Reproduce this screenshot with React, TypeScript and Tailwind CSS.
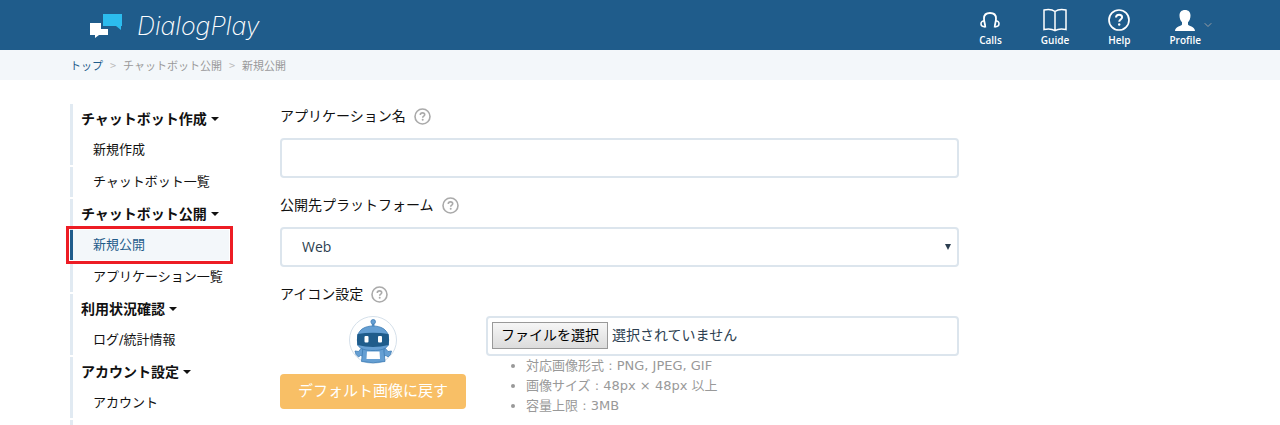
import type { ReactNode } from 'react'
import { ChevronDown } from 'lucide-react'
import clsx from 'clsx'

type MenuGroup = {
  title: string
  items: { label: string; active?: boolean }[]
}

const menu: MenuGroup[] = [
  { title: 'チャットボット作成', items: [{ label: '新規作成' }, { label: 'チャットボット一覧' }] },
  {
    title: 'チャットボット公開',
    items: [{ label: '新規公開', active: true }, { label: 'アプリケーション一覧' }],
  },
  { title: '利用状況確認', items: [{ label: 'ログ/統計情報' }] },
  { title: 'アカウント設定', items: [{ label: 'アカウント' }] },
]

function Logo() {
  return (
    <a href="#" className="ml-5 flex items-center gap-[14px] text-white">
      <svg width="33" height="25" viewBox="0 0 33 25">
        <path d="M13 1h19v12h-1v4l-5-4H13z" fill="#2cbcee" />
        <path d="M0 10h11v6h7v6H9l-4 3v-3H0z" fill="#fff" />
      </svg>
      <span className="pt-0.5 font-[Inter,sans-serif] text-[25px] leading-none font-extralight italic">DialogPlay</span>
    </a>
  )
}

function CallsIcon() {
  return (
    <svg width="20" height="24" viewBox="0 0 20 24" fill="none" stroke="#fff">
      <path d="M5.300 19.500C5.300 16 4 14 4 10.500 4 7 6.500 5 10 5s6 2 6 5.500c0 3.500-1.300 5.500-1.300 9" strokeWidth="1.800" />
      <path d="M5 12.800c-2.600 0-4 1.100-4 3s1.400 3 4 3" strokeWidth="1.600" />
      <path d="M15 12.800c2.600 0 4 1.100 4 3s-1.400 3-4 3" strokeWidth="1.600" />
    </svg>
  )
}

function GuideIcon() {
  return (
    <svg width="24" height="24" viewBox="0 0 24 24" fill="none" stroke="#fff" strokeWidth="1.500">
      <path d="M12 3.500C9.500 1.600 5 1.200 1 2v19.500c4-.8 8.500-.4 11 1.200 2.500-1.600 7-2 11-1.200V2c-4-.8-8.500-.4-11 1.500zM12 3.500v19" />
    </svg>
  )
}

function HelpIcon() {
  return (
    <svg width="22" height="24" viewBox="0 0 22 24" fill="none" stroke="#fff">
      <circle cx="11" cy="12" r="10" strokeWidth="1.700" />
      <path d="M8 9.500c0-1.800 1.400-2.800 3.100-2.800s3 1 3 2.600c0 2.200-2.900 2.200-2.900 4.400" strokeWidth="2" />
      <circle cx="11.200" cy="16.500" r="1.200" fill="#fff" stroke="none" />
    </svg>
  )
}

function ProfileIcon() {
  return (
    <svg width="22" height="24" viewBox="0 0 22 24" fill="#fff">
      <path d="M11 2c3.600 0 5.500 2.100 5.500 5.500 0 3-1 5.200-2.500 6.700v2.300c0 1.200 7 2 7 6.500H1c0-4.500 7-5.300 7-6.500v-2.300C6.500 12.700 5.500 10.500 5.500 7.500 5.500 4.100 7.400 2 11 2z" />
    </svg>
  )
}

function NavItem({ label, children }: { label: string; children: ReactNode }) {
  return (
    <a
      href="#"
      className="flex flex-col items-center gap-0.5 pt-1 font-['Open_Sans',sans-serif] text-[10px] leading-3 font-semibold text-white"
    >
      {children}
      {label}
    </a>
  )
}

function Header() {
  return (
    <header className="bg-[#1f5c8b]">
      <div className="mx-auto flex h-[50px] max-w-[1140px] items-center justify-between">
        <Logo />
        <nav className="flex items-center">
          <div className="flex items-center gap-[39px]">
            <NavItem label="Calls"><CallsIcon /></NavItem>
            <NavItem label="Guide"><GuideIcon /></NavItem>
            <NavItem label="Help"><HelpIcon /></NavItem>
            <NavItem label="Profile"><ProfileIcon /></NavItem>
          </div>
          <ChevronDown className="-mr-1 ml-px size-3 text-[#9a9fa4]" strokeWidth={2} />
        </nav>
      </div>
    </header>
  )
}

function Breadcrumb() {
  return (
    <nav aria-label="breadcrumb" className="bg-[#f3f7fa]">
      <ol className="mx-auto flex h-[30px] max-w-[1140px] items-center gap-[7px] font-['Noto_Sans_CJK_JP',sans-serif] text-[11px] text-[#999]">
        <li><a href="#" className="text-[#1f5c8b]">トップ</a></li>
        <li className="text-[#bbb]">&gt;</li>
        <li>チャットボット公開</li>
        <li className="text-[#bbb]">&gt;</li>
        <li>新規公開</li>
      </ol>
    </nav>
  )
}

function Sidebar() {
  return (
    <aside className="flex w-[159px] shrink-0 flex-col">
      {menu.map((group) => (
        <section key={group.title}>
          <h2 className="flex h-[31px] items-center gap-1 border-l-3 border-[#e1eaf2] pb-0.5 pl-2 text-sm font-bold whitespace-nowrap">
            {group.title}
            <svg width="8" height="4" viewBox="0 0 8 4"><path d="M0 0h8L4 4z" fill="#111" /></svg>
          </h2>
          <ul>
            {group.items.map((item) => (
              <li key={item.label} className="mb-0.5">
                <a
                  href="#"
                  className={clsx(
                    'flex h-[30px] items-center border-l-3 pl-5 text-[13px] whitespace-nowrap',
                    item.active
                      ? 'border-[#1f5c8b] bg-[#f3f7fa] text-[#1f5c8b] outline-3 outline-offset-1 outline-[#ed1c24]'
                      : 'border-[#e1eaf2]'
                  )}
                >
                  {item.label}
                </a>
              </li>
            ))}
          </ul>
        </section>
      ))}
      {/* the rail runs on to the foot of the page */}
      <div className="flex-1 border-l-3 border-[#e1eaf2]" />
    </aside>
  )
}

function FieldLabel({ htmlFor, children }: { htmlFor: string; children: ReactNode }) {
  return (
    <div className="mb-2.5 flex h-6 items-center gap-2 text-sm">
      <label htmlFor={htmlFor}>{children}</label>
      <button type="button" aria-label="ヘルプ">
        <svg width="17" height="17" viewBox="0 0 17 17" fill="none" stroke="#aaa">
          <circle cx="8.500" cy="8.500" r="7.500" strokeWidth="1.600" />
          <path d="M6.300 6.900c0-1.300.9-2 2.200-2s2.200.7 2.200 1.800c0 1.500-2 1.500-2 3.100" strokeWidth="1.600" />
          <circle cx="8.700" cy="11.800" r="1" fill="#aaa" stroke="none" />
        </svg>
      </button>
    </div>
  )
}

function Robot() {
  return (
    <svg width="48" height="48" viewBox="0 0 48 48">
      <circle cx="24" cy="24" r="23.500" fill="#fff" stroke="#d5e0ea" />
      <g fill="#659fd3" stroke="#3d7cb5" strokeWidth=".8">
        <path d="M23.300 8h1.700v4h-1.700z" />
        <circle cx="24.200" cy="5.800" r="2.300" />
        <path d="M13 31.500l-3.500 4-3.500-.5 1 3.500 2.500 2.500 2-1.500 3.500 1zM35.500 31.500l3.500 4 3.500-.5-1 3.500-2.500 2.500-2-1.500-3.500 1z" />
        <path d="M14 31h20.500l1.500 14.500q-12 2.500-23.500 0z" />
        <path d="M8.500 20C10 13.500 16 10 24 10s14 3.500 15.500 10v9c-3 4.500-8.500 5.500-15.500 5.500S11.500 33.500 8.500 29z" />
      </g>
      <path d="M8.500 18q15.500-2.500 31 0 1.200 6 0 11-15.500 4-31 0-1.200-5 0-11z" fill="#1f5c8b" />
      <rect x="15.500" y="20" width="4" height="6.500" rx="1" fill="#fff" />
      <rect x="29" y="20" width="4" height="6.500" rx="1" fill="#fff" />
      <path d="M18 35.500h12.500l.5 7.500H17.500z" fill="#fff" />
    </svg>
  )
}

function PublishForm() {
  return (
    <form className="max-w-[679px] min-w-0 flex-1">
      <div className="mb-[15px]">
        <FieldLabel htmlFor="app-name">アプリケーション名</FieldLabel>
        <input id="app-name" type="text" className="block h-10 w-full rounded border-2 border-[#dce5ed] px-5 text-sm" />
      </div>

      <div className="mb-[15px]">
        <FieldLabel htmlFor="platform">公開先プラットフォーム</FieldLabel>
        <div className="relative">
          <select
            id="platform"
            className="block h-10 w-full appearance-none rounded border-2 border-[#dce5ed] bg-white px-5 font-['Open_Sans',sans-serif] text-sm text-[#2c3e50]"
          >
            <option>Web</option>
          </select>
          <svg width="6" height="6" viewBox="0 0 6 6" className="pointer-events-none absolute top-[17px] right-2">
            <path d="M0 0h6L3 6z" fill="#2c3e50" />
          </svg>
        </div>
      </div>

      <FieldLabel htmlFor="icon-file">アイコン設定</FieldLabel>
      <div className="flex gap-5">
        <div className="flex w-[186px] shrink-0 flex-col items-center gap-2.5">
          <Robot />
          <button type="button" className="h-[35px] w-full rounded bg-[#f8bf66] text-[15px] text-white">
            デフォルト画像に戻す
          </button>
        </div>
        <div className="min-w-0 flex-1">
          <div className="flex h-10 items-center gap-1 rounded border-2 border-[#dce5ed] px-1 pb-0.5 text-sm text-[#2c3e50]">
            <input id="icon-file" type="file" className="sr-only" />
            <label
              htmlFor="icon-file"
              className="flex h-[27px] items-center border border-[#999] bg-linear-to-b from-[#f6f6f6] to-[#dcdcdc] px-2 text-black"
            >
              ファイルを選択
            </label>
            <span>選択されていません</span>
          </div>
          <ul className="list-disc pl-10 text-[13px] leading-5 text-[#999]">
            <li>対応画像形式 : PNG, JPEG, GIF</li>
            <li>画像サイズ : 48px × 48px 以上</li>
            <li>容量上限 : 3MB</li>
          </ul>
        </div>
      </div>
    </form>
  )
}

export default function App() {
  return (
    <div className="flex min-h-screen flex-col bg-white font-['DejaVu_Sans','Noto_Sans_CJK_JP',sans-serif] text-[#111]">
      <Header />
      <Breadcrumb />
      <main className="mx-auto flex w-full max-w-[1140px] flex-1 gap-[51px] pt-6">
        <Sidebar />
        <PublishForm />
      </main>
    </div>
  )
}
